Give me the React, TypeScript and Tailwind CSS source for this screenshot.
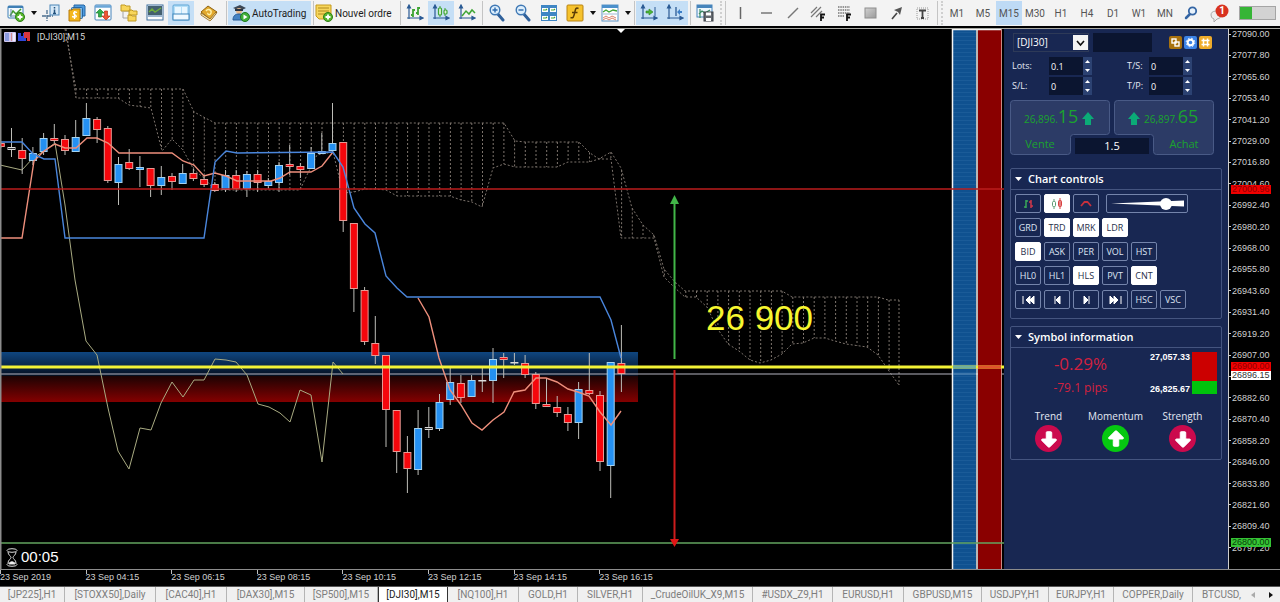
import React, { useState } from 'react';
import { ArrowBigDown, ArrowBigUp } from 'lucide-react';

// [top, bottom, high, low, direction] per bar, one entry every BAR units
type Candle = [number, number, number, number, 'u' | 'd' | 'n'];
type Point = [number, number];

const BAR = 10.7;
const PLOT_W = 1004;
const barX = (i: number) => 0.8 + i * BAR;

const CANDLES: Candle[] = [
  [143, 147, 141, 148, 'd'], [147, 150, 128, 157, 'n'], [150, 159, 138, 174, 'd'], [153, 161, 147, 165, 'u'],
  [138, 152, 133, 155, 'u'], [138, 141, 124, 143, 'd'], [139, 151, 135, 155, 'd'], [137, 152, 120, 152, 'u'],
  [118, 136, 103, 136, 'u'], [119, 130, 117, 143, 'd'], [128, 181, 126, 183, 'd'], [164, 183, 157, 205, 'u'],
  [162, 169, 149, 170, 'd'], [167, 170, 156, 187, 'u'], [168, 186, 168, 197, 'd'], [177, 186, 166, 195, 'u'],
  [176, 182, 173, 190, 'd'], [173, 184, 164, 184, 'u'], [173, 179, 169, 181, 'd'], [179, 185, 176, 187, 'd'],
  [184, 191, 182, 192, 'd'], [175, 190, 170, 192, 'u'], [175, 189, 170, 192, 'd'], [174, 189, 171, 197, 'u'],
  [174, 183, 170, 192, 'd'], [181, 186, 178, 188, 'u'], [165, 183, 162, 192, 'u'], [164, 167, 145, 175, 'd'],
  [166, 170, 163, 178, 'd'], [153, 169, 147, 169, 'u'], [151, 154, 133, 154, 'u'], [143, 151, 103, 152, 'u'],
  [142, 221, 142, 232, 'd'], [223, 289, 223, 312, 'd'], [290, 342, 287, 345, 'd'], [343, 356, 316, 364, 'd'],
  [355, 410, 355, 447, 'd'], [410, 452, 410, 473, 'd'], [452, 469, 436, 493, 'd'], [428, 470, 410, 475, 'u'],
  [427, 430, 407, 438, 'n'], [402, 429, 394, 431, 'u'], [382, 400, 368, 405, 'u'], [383, 398, 375, 403, 'd'],
  [380, 397, 375, 397, 'u'], [380, 381, 368, 392, 'n'], [359, 381, 348, 403, 'u'], [357, 360, 353, 378, 'd'],
  [362, 363, 353, 365, 'n'], [363, 375, 355, 378, 'd'], [374, 404, 372, 409, 'd'], [404, 407, 379, 407, 'd'],
  [407, 413, 396, 417, 'd'], [414, 423, 407, 431, 'd'], [389, 423, 382, 439, 'u'], [390, 394, 353, 395, 'd'],
  [395, 462, 391, 471, 'd'], [362, 466, 362, 498, 'u'], [363, 374, 325, 392, 'd'],
];

const KIJUN: Point[] = [
  [0, 142], [22, 142], [33, 154], [44, 159], [55, 159], [65, 238], [204, 238], [215, 162], [226, 151], [237, 153],
  [333, 152], [343, 167], [354, 208], [365, 224], [375, 233], [386, 276], [397, 288], [407, 297], [600, 297],
  [611, 320], [621, 358],
];
const TENKAN: Point[] = [
  [0, 238], [22, 238], [34, 161], [44, 151], [55, 144], [65, 148], [76, 148], [87, 138], [97, 138], [108, 143],
  [119, 153], [172, 153], [183, 161], [194, 165], [204, 176], [215, 173], [226, 176], [237, 181], [271, 181],
  [280, 178], [290, 172], [311, 172], [322, 166], [333, 152],
];
const TENKAN_RIGHT: Point[] = [
  [418, 298], [429, 317], [439, 358], [450, 390], [461, 405], [472, 423], [482, 430], [493, 420], [504, 412],
  [514, 392], [525, 390], [536, 378], [546, 378], [557, 382], [568, 389], [578, 392], [589, 396], [600, 412],
  [611, 425], [621, 411],
];
const CHIKOU: Point[] = [
  [0, 165], [22, 170], [33, 158], [44, 151], [55, 143], [65, 205], [75, 280], [86, 341], [97, 355], [108, 408],
  [118, 451], [129, 469], [140, 428], [151, 430], [161, 403], [172, 382], [183, 397], [194, 380], [204, 380],
  [215, 359], [226, 360], [236, 362], [247, 375], [258, 404], [269, 407], [280, 413], [290, 422], [300, 390],
  [311, 395], [322, 462], [333, 362], [343, 374],
];
const SPAN_A: Point[] = [
  [65, 29], [76, 89], [183, 89], [194, 112], [215, 123], [504, 123], [515, 141], [525, 142], [579, 142], [590, 153],
  [599, 159], [611, 152], [621, 168], [632, 208], [643, 225], [654, 235], [664, 269], [675, 282], [685, 291],
  [782, 291], [792, 297], [878, 297], [888, 300], [899, 300],
];
const SPAN_B: Point[] = [
  [66, 29], [76, 98], [118, 98], [129, 105], [151, 108], [162, 151], [172, 139], [183, 150], [194, 170], [204, 178],
  [215, 190], [300, 190], [307, 175], [317, 155], [333, 152], [343, 193], [354, 192], [365, 189], [375, 189],
  [386, 190], [397, 196], [450, 196], [461, 200], [472, 202], [482, 207], [493, 168], [504, 164], [515, 167],
  [557, 167], [568, 162], [589, 162], [599, 159], [611, 159], [621, 238], [654, 238], [664, 277], [675, 288],
  [685, 297], [696, 297], [707, 307], [717, 328], [728, 344], [739, 351], [750, 360], [760, 363], [771, 360],
  [782, 354], [792, 344], [803, 343], [814, 338], [825, 338], [835, 341], [846, 344], [867, 347], [878, 355],
  [889, 371], [899, 385],
];

const toPoints = (pts: Point[]) => pts.map(p => p.join(',')).join(' ');

function valueAt(pts: Point[], x: number) {
  for (let k = 1; k < pts.length; k++) {
    if (x <= pts[k][0]) {
      const [x0, y0] = pts[k - 1];
      const [x1, y1] = pts[k];
      return y0 + ((y1 - y0) * (x - x0)) / (x1 - x0);
    }
  }
  return pts[pts.length - 1][1];
}

const HATCH = Array.from({ length: 78 }, (_, k) => Math.min(barX(k + 7) + 0.2, 899));

const PRICES = Array.from({ length: 25 }, (_, i) => (27090 - i * 12.2).toFixed(2));
const TIMES = ['23 Sep 2019', '23 Sep 04:15', '23 Sep 06:15', '23 Sep 08:15', '23 Sep 10:15', '23 Sep 12:15', '23 Sep 14:15', '23 Sep 16:15'];
const TIMEFRAMES = ['M1', 'M5', 'M15', 'M30', 'H1', 'H4', 'D1', 'W1', 'MN'];

const TABS = [
  { name: '[JP225],H1', width: 'w-[65px]' },
  { name: '[STOXX50],Daily', width: 'w-[91px]' },
  { name: '[CAC40],H1', width: 'w-[71px]' },
  { name: '[DAX30],M15', width: 'w-[78px]' },
  { name: '[SP500],M15', width: 'w-[73px]' },
  { name: '[DJI30],M15', width: 'w-[70px]' },
  { name: '[NQ100],H1', width: 'w-[71px]' },
  { name: 'GOLD,H1', width: 'w-[59px]' },
  { name: 'SILVER,H1', width: 'w-[65px]' },
  { name: '_CrudeOilUK_X9,M15', width: 'w-[110px]' },
  { name: '#USDX_Z9,H1', width: 'w-[80px]' },
  { name: 'EURUSD,H1', width: 'w-[71px]' },
  { name: 'GBPUSD,M15', width: 'w-[78px]' },
  { name: 'USDJPY,H1', width: 'w-[67px]' },
  { name: 'EURJPY,H1', width: 'w-[65px]' },
  { name: 'COPPER,Daily', width: 'w-[79px]' },
];

/* ---------- toolbar icons ---------- */

const Svg = ({ children }: { children: React.ReactNode }) => (
  <svg viewBox="0 0 18 18" className="w-[18px] h-[18px] shrink-0" fill="none" aria-hidden="true">{children}</svg>
);
const Axes = () => (
  <path d="M3 2v13M1 14h15M3 1L1.500 4h3zM17 14l-3-1.500v3z" stroke="#2a5a94" fill="#2a5a94" strokeWidth="1.200" />
);
const PlusBadge = () => (
  <g>
    <circle cx="13" cy="13" r="4.500" fill="#55b52c" stroke="#2f7d14" />
    <path d="M13 10.500v5M10.500 13h5" stroke="#fff" strokeWidth="1.800" />
  </g>
);

const NewChartIcon = () => (
  <Svg>
    <rect x="1" y="2" width="15" height="12" rx="1" fill="#f4faff" stroke="#3f7fb5" />
    <path d="M1 3h15" stroke="#3f7fb5" strokeWidth="2" />
    <path d="M3 12l3-5 3 3 5-5" stroke="#3f9a2c" strokeWidth="1.500" />
    <path d="M4 5v8M3 12h10" stroke="#6d8db0" />
    <PlusBadge />
  </Svg>
);
const DataWindowIcon = () => (
  <Svg>
    <path d="M5 6v11M0 12h11" stroke="#4c6f8e" strokeDasharray="4 1" strokeWidth="1.300" />
    <rect x="8" y="1" width="9" height="10" fill="#d7e9f7" stroke="#4b86b8" />
    <path d="M12.500 3v1.500M12.500 5.500v4M11 9.500h3" stroke="#23527c" strokeWidth="1.500" />
  </Svg>
);
const MarketWatchIcon = () => (
  <Svg>
    <path d="M6 1h10l1 1v10H6z" fill="#4d9be0" stroke="#2767a3" />
    <rect x="3.500" y="3.500" width="11" height="11" rx="1" fill="#7ab8ea" stroke="#2767a3" />
    <path d="M1 6h3l1-1h7v12H1z" fill="#f4b71c" stroke="#b67a0c" />
    <path d="M9 8.500c-3-1.500-4.500 1-2.500 2s3 3-.5 2.500l-2-.5M6.500 7v8" stroke="#fff" strokeWidth="1.300" />
  </Svg>
);
const TickArrowsIcon = () => (
  <Svg>
    <rect x="1" y="1" width="16" height="15" rx="1" fill="#fdfdfd" stroke="#4684bb" />
    <path d="M1 2.500h16" stroke="#6ba7d8" strokeWidth="2.500" />
    <path d="M6 5l4 4H7.500v4h-3V9H2z" fill="#32b04c" stroke="#1e8135" strokeWidth=".7" />
    <path d="M12 16l4-4h-2.500V7h-3v5H8z" fill="#ef5634" stroke="#b93217" strokeWidth=".7" />
  </Svg>
);
const NavigatorIcon = () => (
  <Svg>
    <path d="M3 5v9h5M4 7h6" stroke="#a5a5a5" />
    <path d="M1 1h4l1 1h4v5H1zM9 6h3l1 1h4v4H9zM8 11h3l1 1h4v5H8z" fill="#f8d65b" stroke="#c09a25" />
  </Svg>
);
const TerminalIcon = () => (
  <Svg>
    <rect x="1" y="1" width="16" height="15" fill="#fff" stroke="#3c6e9e" />
    <rect x="2" y="2" width="14" height="9" fill="#44606f" />
    <path d="M3 8l3-3 3 3 6-4" stroke="#6fae3c" strokeWidth="1.400" />
    <path d="M2 12h14" stroke="#3c6e9e" />
  </Svg>
);
const SplitIcon = () => (
  <Svg>
    <rect x="1" y="1" width="16" height="15" rx="1" fill="#b5def7" stroke="#5da5d6" />
    <path d="M3 3h6v7H3zM10 3h5v7h-5z" fill="#e9f7ff" />
    <rect x="1" y="10" width="16" height="6" fill="#f1faff" stroke="#3f86bb" />
  </Svg>
);
const BookIcon = () => (
  <Svg>
    <path d="M1 8l7-6 9 6-6 8z" fill="#e2a92f" stroke="#8f6312" />
    <path d="M1 9l9 6 6-7v2l-6 7-9-6z" fill="#fff3c8" stroke="#8f6312" strokeWidth=".8" />
    <path d="M6 7c2-3 6-1 5 2s-4 1-3 0" stroke="#fff1a8" strokeWidth="1.400" />
  </Svg>
);
const AutoTradingIcon = () => (
  <Svg>
    <path d="M1 4l7-3 6 3-6 3z" fill="#3d4856" />
    <circle cx="7" cy="7" r="3" fill="#e8b98c" />
    <path d="M3 5h8v2H3z" fill="#2a3340" />
    <path d="M1 16c0-4 2-6 6-6s5 2 5 6z" fill="#4483c4" stroke="#255b96" />
    <circle cx="13" cy="13" r="4.500" fill="#3fae3a" stroke="#1f7a1d" />
    <path d="M11.500 10.500v5l4-2.500z" fill="#fff" />
  </Svg>
);
const NewOrderIcon = () => (
  <Svg>
    <path d="M1 1h15v11l-5 3H4l-3-3z" fill="#f7d65c" stroke="#c59a1c" />
    <path d="M3 4h11M3 7h11M3 10h7" stroke="#b08a1e" />
    <PlusBadge />
  </Svg>
);
const BarsIcon = () => (
  <Svg><Axes /><path d="M7 5v8M5 11h2M7 6h2M12 3v8M10 9h2M12 4h2" stroke="#3fa535" strokeWidth="1.800" /></Svg>
);
const CandlesIcon = () => (
  <Svg>
    <Axes />
    <path d="M8 2v11M13 4v8" stroke="#3fa535" />
    <rect x="6.500" y="4" width="3" height="7" rx="1" fill="#dff3d9" stroke="#3fa535" strokeWidth="1.200" />
    <rect x="12" y="6" width="3" height="4" rx="1" fill="#dff3d9" stroke="#3fa535" strokeWidth="1.200" />
  </Svg>
);
const LineIcon = () => (
  <Svg><Axes /><path d="M4 12l4-5 3 3 3-4 3 3" stroke="#3fa535" strokeWidth="1.500" /></Svg>
);
const ZoomGlass = ({ plus }: { plus?: boolean }) => (
  <Svg>
    <path d="M9 9l6 7" stroke="#30619b" strokeWidth="3" strokeLinecap="round" />
    <circle cx="7" cy="6" r="4.800" fill="#dceefc" stroke="#3f78b4" strokeWidth="1.400" />
    <path d={plus ? 'M4.500 6h5M7 3.500v5' : 'M4.500 6h5'} stroke="#2b69ad" strokeWidth="1.400" />
  </Svg>
);
const TileIcon = () => (
  <Svg>
    <rect x="1" y="1" width="16" height="16" fill="#3f86c4" />
    <path d="M2 4h6v4H2zM10 4h6v4h-6zM2 12h6v4H2zM10 12h6v4h-6z" fill="#fff" />
    <path d="M3 6h3l1-1M11 6h3l1-1M3 14h3l1-1M11 14h3l1-1" stroke="#4aa535" strokeWidth="1.200" />
  </Svg>
);
const IndicatorIcon = () => (
  <Svg>
    <rect x="1" y="1" width="16" height="16" rx="1" fill="#f6c22d" stroke="#b88313" />
    <path d="M12.500 4.500c-3-1.500-3 1-4 5s-1.500 5-4 4M6 8.500h5.500" stroke="#5b3c06" strokeWidth="1.500" />
  </Svg>
);
const TemplateIcon = () => (
  <Svg>
    <rect x="1" y="1" width="16" height="16" fill="#fff" stroke="#5d95c5" />
    <path d="M1 2.500h16" stroke="#4b90cb" strokeWidth="3" />
    <path d="M2 8l3-2 3 2 4-2 4 1" stroke="#3fa535" strokeWidth="1.300" />
    <path d="M2 10h14" stroke="#9cb9d0" />
    <path d="M2 14l3-2 3 2 3-2 4 2M2 16l3-2 3 2 3-2 4 2" stroke="#d9826a" />
  </Svg>
);
const AutoScrollIcon = () => (
  <Svg><Axes /><path d="M15 3v9" stroke="#2a5a94" /><path d="M6 7h3V5l4 3-4 3V9H6z" fill="#4cb539" stroke="#2d8420" strokeWidth=".6" /></Svg>
);
const ShiftIcon = () => (
  <Svg><Axes /><path d="M10 3v9" stroke="#2a5a94" strokeWidth="1.300" /><path d="M16 7h-2V5l-3 3 3 3V9h2z" fill="#3d7fc7" /></Svg>
);
const SaveChartIcon = () => (
  <Svg>
    <rect x="1" y="1" width="15" height="12" fill="#eef7fd" stroke="#4684bb" />
    <path d="M1 2.500h15" stroke="#4684bb" strokeWidth="3" />
    <path d="M4 5v9M3 10l3-3 3 2 5-3" stroke="#3a8a63" strokeWidth="1.200" />
    <rect x="8" y="8" width="9" height="9" fill="#656a70" stroke="#3c4046" />
    <path d="M10 8.500h5v3h-5zM10 14h5v3h-5z" fill="#fff" />
  </Svg>
);
const VLineIcon = () => <Svg><path d="M9.500 3v12" stroke="#666" strokeWidth="1.500" /></Svg>;
const HLineIcon = () => <Svg><path d="M4 9h11" stroke="#777" strokeWidth="1.500" /></Svg>;
const TrendIcon = () => <Svg><path d="M5 14L15 4" stroke="#777" strokeWidth="1.500" /></Svg>;
const ChannelIcon = () => (
  <Svg>
    <path d="M2 13L12 3M2 9l6-6M7 13l6-6" stroke="#777" strokeWidth="1.200" />
    <path d="M12 17v-6.500h4M12 13.500h3" stroke="#111" strokeWidth="1.800" />
  </Svg>
);
const FiboIcon = () => (
  <Svg>
    <path d="M3 3h12M3 6h12M3 9h12M3 12h6" stroke="#777" strokeWidth="1.300" strokeDasharray="1.500 .8" />
    <path d="M12 17v-6.500h4M12 13.500h3" stroke="#111" strokeWidth="1.800" />
  </Svg>
);
const RectIcon = () => (
  <Svg>
    <defs>
      <linearGradient id="rectShade" x1="0" y1="0" x2="1" y2="1">
        <stop offset="0" stopColor="#d2d2d2" />
        <stop offset="1" stopColor="#999" />
      </linearGradient>
    </defs>
    <rect x="4" y="4" width="11" height="10" fill="url(#rectShade)" stroke="#8e8e8e" />
  </Svg>
);
const ArrowIcon = () => (
  <Svg><path d="M5 15l5-6" stroke="#444" strokeWidth="1.600" /><path d="M7 6l8-3-2 8-2-3z" fill="#555" /></Svg>
);
const TextIcon = () => (
  <Svg>
    <rect x="4" y="4" width="11" height="11" stroke="#999" strokeDasharray="1 1" />
    <path d="M6 6.500h7M9.500 6.500V14M8 14h3" stroke="#444" strokeWidth="1.800" />
  </Svg>
);
const SearchIcon = () => (
  <Svg>
    <path d="M8 10l-4 4" stroke="#3465a4" strokeWidth="2.500" strokeLinecap="round" />
    <circle cx="10.500" cy="7" r="3.700" fill="#e8f2fb" stroke="#3465a4" strokeWidth="1.800" />
  </Svg>
);

const Sep = () => (
  <span className="w-1 h-6 shrink-0 flex justify-center"><span className="w-px h-full bg-[#c4c4c4]" /></span>
);
const Grip = () => (
  <span className="w-[5px] h-6 shrink-0 flex justify-center"><span className="h-full border-l-2 border-dotted border-[#cfcfcf]" /></span>
);

function ToolButton({ label, active, children }: { label: string; active?: boolean; children: React.ReactNode }) {
  return (
    <button
      aria-label={label}
      className={`w-[26px] h-6 shrink-0 flex items-center justify-center cursor-pointer ${active ? 'bg-[#c5dff6]' : ''}`}
    >
      {children}
    </button>
  );
}

const Caret = ({ label }: { label: string }) => (
  <button aria-label={label} className="w-[9px] h-6 shrink-0 flex items-center justify-center">
    <svg viewBox="0 0 6 4" className="w-1.5 h-1 shrink-0"><path d="M0 0h6L3 4z" fill="#111" /></svg>
  </button>
);

function Toolbar() {
  const [frame, setFrame] = useState('M15');
  return (
    <header className="h-[26px] shrink-0 overflow-hidden bg-[#f3f3f3] flex items-center pl-[3px] font-['Roboto',sans-serif] text-[10px] text-[#1c1c1c]">
      <ToolButton label="Nouveau graphique"><NewChartIcon /></ToolButton>
      <Caret label="Liste des graphiques" />
      <ToolButton label="Fenêtre de données"><DataWindowIcon /></ToolButton>
      <ToolButton label="Observation du marché"><MarketWatchIcon /></ToolButton>
      <ToolButton label="Ticks"><TickArrowsIcon /></ToolButton>
      <ToolButton label="Navigateur"><NavigatorIcon /></ToolButton>
      <ToolButton label="Terminal"><TerminalIcon /></ToolButton>
      <ToolButton label="Testeur" active><SplitIcon /></ToolButton>
      <button aria-label="Bibliothèque" className="w-[30px] h-6 shrink-0 flex items-center justify-center"><BookIcon /></button>
      <Sep />
      <button className="w-[83px] h-6 shrink-0 flex items-center gap-0.5 pl-1 bg-[#c5dff6] whitespace-nowrap">
        <AutoTradingIcon />AutoTrading
      </button>
      <Sep />
      <button className="w-[83px] h-6 shrink-0 flex items-center gap-0.5 whitespace-nowrap">
        <NewOrderIcon />Nouvel ordre
      </button>
      <Sep />
      <ToolButton label="Barres"><BarsIcon /></ToolButton>
      <ToolButton label="Chandeliers" active><CandlesIcon /></ToolButton>
      <ToolButton label="Ligne"><LineIcon /></ToolButton>
      <Sep />
      <ToolButton label="Zoom avant"><ZoomGlass plus /></ToolButton>
      <ToolButton label="Zoom arrière"><ZoomGlass /></ToolButton>
      <ToolButton label="Mosaïque"><TileIcon /></ToolButton>
      <ToolButton label="Indicateurs"><IndicatorIcon /></ToolButton>
      <Caret label="Liste des indicateurs" />
      <ToolButton label="Modèles"><TemplateIcon /></ToolButton>
      <Caret label="Liste des modèles" />
      <Sep />
      <ToolButton label="Défilement automatique" active><AutoScrollIcon /></ToolButton>
      <ToolButton label="Décalage du graphique" active><ShiftIcon /></ToolButton>
      <Sep />
      <ToolButton label="Enregistrer"><SaveChartIcon /></ToolButton>
      <Grip />
      <Sep />
      <ToolButton label="Ligne verticale"><VLineIcon /></ToolButton>
      <ToolButton label="Ligne horizontale"><HLineIcon /></ToolButton>
      <ToolButton label="Ligne de tendance"><TrendIcon /></ToolButton>
      <ToolButton label="Canal Fibonacci"><ChannelIcon /></ToolButton>
      <ToolButton label="Retracement Fibonacci"><FiboIcon /></ToolButton>
      <ToolButton label="Rectangle"><RectIcon /></ToolButton>
      <ToolButton label="Flèche"><ArrowIcon /></ToolButton>
      <ToolButton label="Texte"><TextIcon /></ToolButton>
      <Sep />
      <Grip />
      {TIMEFRAMES.map(tf => (
        <button
          key={tf}
          onClick={() => setFrame(tf)}
          className={`w-[26px] h-6 shrink-0 text-center text-[#555] cursor-pointer ${frame === tf ? 'bg-[#bedaf5]' : ''}`}
        >
          {tf}
        </button>
      ))}
      <ToolButton label="Rechercher"><SearchIcon /></ToolButton>
      <button aria-label="Messages" className="relative w-[30px] h-6 shrink-0">
        <svg viewBox="0 0 20 20" className="absolute left-1.5 top-0.5 w-5 h-5" aria-hidden="true">
          <path d="M1 12a5 4 0 1 1 6 4l-3 3v-3a4 4 0 0 1-3-4z" fill="#eee" stroke="#aaa" />
          <circle cx="12" cy="8" r="6.500" fill="#d8321f" />
        </svg>
        <span className="absolute left-3.5 top-1 w-2 text-[10px] leading-3 font-bold text-white">1</span>
      </button>
      <span className="ml-[5px] w-[37px] h-3.5 shrink-0 flex border border-[#a5a5a5] bg-[#d3d3d3]">
        <span className="w-3 bg-[#36b536]" />
      </span>
    </header>
  );
}

/* ---------- plot ---------- */

function Plot() {
  return (
    <div className="relative flex-1 min-w-0 bg-black overflow-hidden">
      <svg viewBox="0 29 1004 540" preserveAspectRatio="none" className="block w-full h-full" fill="none">
        <defs>
          <linearGradient id="zoneBlue" x1="0" y1="0" x2="0" y2="1">
            <stop offset="0" stopColor="#0f4680" />
            <stop offset="1" stopColor="#050f20" />
          </linearGradient>
          <linearGradient id="zoneRed" x1="0" y1="0" x2="0" y2="1">
            <stop offset="0" stopColor="#1c0303" />
            <stop offset="1" stopColor="#840000" />
          </linearGradient>
          <pattern id="stripes" width="22" height="4" patternUnits="userSpaceOnUse">
            <rect width="22" height="4" fill="#0f5190" />
            <rect width="22" height="1" fill="#1a5b98" />
          </pattern>
        </defs>

        <rect x="0" y="352" width="638" height="24" fill="url(#zoneBlue)" />
        <rect x="0" y="376" width="638" height="26" fill="url(#zoneRed)" />

        {/* cloud */}
        <g stroke="#7d746d" strokeWidth="1" strokeDasharray="2 2">
          <polyline points={toPoints(SPAN_A)} />
          <polyline points={toPoints(SPAN_B)} />
          {HATCH.map(x => <path key={x} d={`M${x} ${valueAt(SPAN_A, x)}V${valueAt(SPAN_B, x)}`} />)}
        </g>

        <path d="M0 374h1004" stroke="#b4b4bf" strokeWidth="1.200" />
        <polyline points={toPoints(CHIKOU)} stroke="#a9ab82" strokeWidth="1" />

        {CANDLES.map(([top, bottom, high, low, dir], i) => (
          <g key={i} stroke={dir === 'u' ? '#a5d3f0' : dir === 'd' ? '#e69a94' : '#dcdcdc'}>
            <path d={`M${barX(i)} ${high}V${low}`} stroke="#bdbdb8" />
            <rect
              x={barX(i) - 3.5}
              y={top + 0.5}
              width="7"
              height={Math.max(bottom - top - 1, 0.5)}
              fill={dir === 'u' ? '#2490f2' : dir === 'd' ? '#f5060c' : '#333'}
            />
          </g>
        ))}

        <polyline points={toPoints(TENKAN)} stroke="#ee8f7c" strokeWidth="1.400" />
        <polyline points={toPoints(TENKAN_RIGHT)} stroke="#ee8f7c" strokeWidth="1.400" />
        <polyline points={toPoints(KIJUN)} stroke="#4a86dc" strokeWidth="1.400" />

        {/* supply and demand columns */}
        <rect x="953" y="29" width="23" height="540" fill="url(#stripes)" />
        <rect x="978" y="29" width="23" height="540" fill="#8a0000" />
        <path d="M952.500 569V29.500H1001M977 29v540" stroke="#f4f4f4" strokeWidth="1.500" />
        <path d="M1001.500 29v540" stroke="#c98a84" />

        {/* levels */}
        <path d="M0 189h1004" stroke="#bb1d1d" strokeWidth="1.500" />
        <path d="M0 367h1004" stroke="#f3f236" strokeWidth="3" />
        <path d="M953 367h23" stroke="#6fae9c" strokeWidth="3" />
        <path d="M978 367h23" stroke="#e0532c" strokeWidth="3" />
        <path d="M953 374h23" stroke="#6c9cc4" />
        <path d="M0 543h1004" stroke="#63a45f" strokeWidth="1.500" />

        <path d="M674.500 203v156" stroke="#42b648" strokeWidth="2" />
        <path d="M670 204l4.500-9 4.500 9z" fill="#42b648" />
        <path d="M674.500 370v170" stroke="#cc1c1c" strokeWidth="2" />
        <path d="M670 539l4.500 8 4.500-8z" fill="#e01616" />
        <path d="M617 29h8l-4 4z" fill="#fff" />
        <path d="M0.500 29v540" stroke="#8c8c8c" strokeWidth="2" />
      </svg>

      <div className="absolute left-1 top-0.5 flex items-center gap-0.5 text-[9px] leading-3 text-[#d8d8d8] font-['Roboto',sans-serif]">
        <svg viewBox="0 0 12 10" className="w-3 h-2.5" aria-hidden="true">
          <rect width="12" height="10" rx="1" fill="#cfc6ec" />
          <path d="M1 1h4v8H1z" fill="#8b9be0" />
          <path d="M7 1h1v8H7z" fill="#d58c8c" />
          <path d="M9 1h2v8H9z" fill="#f2ecfb" />
        </svg>
        <svg viewBox="0 0 13 10" className="w-[13px] h-2.5" aria-hidden="true">
          <path d="M0 1h3v3h2V1h3v8H0z" fill="#3047d8" />
          <path d="M6 0h6v9H9V6H6z" fill="#d8373c" />
        </svg>
        <span className="ml-1">[DJI30],M15</span>
      </div>

      <p className="absolute left-[706px] top-[269px] text-[35px] leading-10 text-[#f7f62f] whitespace-nowrap font-['Liberation_Sans',sans-serif]">
        26 900
      </p>

      <div className="absolute left-1.5 bottom-0.5 flex items-center gap-[3px] text-[15px] leading-5 text-white font-['Liberation_Sans',sans-serif]">
        <svg viewBox="0 0 12 19" className="w-3 h-[19px]" fill="none" stroke="#ddd" aria-hidden="true">
          <ellipse cx="6" cy="2.500" rx="5" ry="1.800" />
          <ellipse cx="6" cy="16.500" rx="5" ry="1.800" />
          <path d="M2 4c0 3 3 4 3 5.500S2 12 2 15M10 4c0 3-3 4-3 5.500s3 2.500 3 5.500" />
          <path d="M3 16c1-3 5-3 6 0z" fill="#fff" />
        </svg>
        00:05
      </div>
    </div>
  );
}

function PriceAxis() {
  return (
    <aside className="relative w-[52px] shrink-0 bg-black border-l border-[#cfcfcf] flex flex-col justify-between pb-4 overflow-hidden font-['Liberation_Sans',sans-serif] text-[9px] leading-[10px] text-[#d0d0d0]">
      {PRICES.map(p => (
        <span key={p} className="flex items-center gap-px h-2.5">
          <span className="w-0.5 h-px bg-[#cfcfcf]" />
          {p}
        </span>
      ))}
      <span className="absolute left-0.5 top-[342px] w-10 h-[9px] leading-[9px] pl-px bg-white text-[#333]">26896.15</span>
      <span className="absolute left-0.5 top-[333px] w-10 h-[9px] leading-[9px] pl-px bg-[#f00000] text-[#8c0000]">26900.00</span>
      <span className="absolute left-0.5 top-[156px] w-10 h-[9px] leading-[9px] pl-px bg-[#f00000] text-[#8c0000]">27000.96</span>
      <span className="absolute left-0.5 top-[509px] w-10 h-[9px] leading-[9px] pl-px bg-[#35c435] text-[#083c08]">26800.00</span>
    </aside>
  );
}

/* ---------- trade panel ---------- */

function Spinner({ id, label, value }: { id: string; label: string; value: string }) {
  return (
    <div className="flex items-center h-[18px]">
      <label htmlFor={id} className="w-[37px] text-[9px] text-[#e4e8f2]">{label}</label>
      <input id={id} defaultValue={value} className="w-[34px] h-[18px] bg-[#0b1530] pl-0.5 text-[9px] text-white outline-none" />
      <span className="w-[9px] h-[18px] flex flex-col bg-[#2c4272]">
        {['M0 3h5L2.500 0z', 'M0 0h5L2.500 3z'].map((d, i) => (
          <button key={d} aria-label={`${label} ${i ? '-' : '+'}`} className="flex-1 flex items-center justify-center">
            <svg viewBox="0 0 5 3" className="w-[5px] h-[3px]"><path d={d} fill="#fff" /></svg>
          </button>
        ))}
      </span>
    </div>
  );
}

function Tile({ label, on, children }: { label: string; on?: boolean; children?: React.ReactNode }) {
  return (
    <button
      aria-label={label}
      className={`w-[26px] h-[19px] shrink-0 rounded-[2px] border flex items-center justify-center text-[9px] leading-3 cursor-pointer ${
        on ? 'bg-white border-white text-[#27304a]' : 'border-[#7484ab] text-[#dfe5f2]'
      }`}
    >
      {children ?? label}
    </button>
  );
}

const Section = ({ title, children }: { title: string; children: React.ReactNode }) => (
  <section className="border border-[#44547f] rounded-[2px]">
    <h2 className="h-[21px] flex items-center gap-1.5 pl-1 border-b border-[#44547f] text-[11px] font-semibold text-white">
      <svg viewBox="0 0 7 4" className="w-[7px] h-1"><path d="M0 0h7L3.500 4z" fill="#fff" /></svg>
      {title}
    </h2>
    {children}
  </section>
);

const skips: [string, string][] = [
  ['Début', 'M1 1v8M8 1L4 5l4 4zM12 1L8 5l4 4z'],
  ['Précédent', 'M4 1v8M9 1L5 5l4 4z'],
  ['Suivant', 'M9 1v8M4 1l4 4-4 4z'],
  ['Fin', 'M12 1v8M1 1l4 4-4 4zM5 1l4 4-4 4z'],
];

const signals = [
  { name: 'Trend', up: false },
  { name: 'Momentum', up: true },
  { name: 'Strength', up: false },
];

const QuoteArrow = () => (
  <svg viewBox="0 0 12 14" className="w-3 h-3.5 shrink-0" aria-hidden="true"><path d="M6 0l6 7H9v6H3V7H0z" fill="#0bab77" /></svg>
);

function TradePanel() {
  return (
    <aside className="w-[224px] shrink-0 bg-[#182752] pl-1.5 pr-1.5 pt-1 font-['Open_Sans',sans-serif] text-[#e4e8f2]">
      <div className="flex items-center h-[19px] pl-[3px]">
        <div className="relative w-[76px] h-[19px] border border-[#2e3a58]">
          <select aria-label="Symbole" className="block w-full h-full appearance-none bg-transparent pl-[3px] text-[10px] leading-[17px] text-white outline-none">
            <option>[DJI30]</option>
          </select>
          <svg viewBox="0 0 15 15" className="absolute right-0 top-px w-[15px] h-[15px] pointer-events-none" fill="none">
            <rect width="15" height="15" fill="#f4f4f4" />
            <path d="M4 6l3.500 4L11 6" stroke="#111" strokeWidth="1.600" />
          </svg>
        </div>
        <input aria-label="Recherche" className="ml-1 w-[59px] h-[19px] bg-[#0b1530] outline-none" />
        <div className="ml-[17px] flex gap-0.5">
          <button aria-label="Lier" className="w-[13px] h-[13px] rounded-[2px] bg-[#a8720f]">
            <svg viewBox="0 0 13 13" fill="none" stroke="#fff" strokeWidth="1.400"><rect x="3" y="3" width="4" height="4" /><rect x="6" y="6" width="4" height="4" /></svg>
          </button>
          <button aria-label="Réglages" className="w-[13px] h-[13px] rounded-[2px] bg-[#3b82e6]">
            <svg viewBox="0 0 13 13" fill="none" stroke="#fff">
              <circle cx="6.500" cy="6.500" r="2.800" strokeWidth="2" />
              <circle cx="6.500" cy="6.500" r="4.300" strokeWidth="1" strokeDasharray="1.700 1.700" />
            </svg>
          </button>
          <button aria-label="Agrandir" className="w-[13px] h-[13px] rounded-[2px] bg-[#efac2b]">
            <svg viewBox="0 0 13 13" fill="none" stroke="#fff" strokeWidth="1.500"><path d="M2.500 4.500h8M2.500 8.500h8M4.500 2.500v8M8.500 2.500v8" /></svg>
          </button>
        </div>
      </div>

      <div className="mt-[5px] pl-0.5 grid grid-cols-[98px_1fr] gap-y-0.5">
        <Spinner id="lots" label="Lots:" value="0.1" />
        <div className="pl-[17px] [&_label]:w-[22px]"><Spinner id="ts" label="T/S:" value="0" /></div>
        <Spinner id="sl" label="S/L:" value="0" />
        <div className="pl-[17px] [&_label]:w-[22px]"><Spinner id="tp" label="T/P:" value="0" /></div>
      </div>

      <div className="relative mt-[5px] flex gap-1 text-[#1ba32e]">
        <button className="relative w-[100px] h-[55px] text-left">
          <svg viewBox="0 0 100 55" className="absolute inset-0" aria-hidden="true">
            <path d="M3.500.5h93a3 3 0 0 1 3 3v28a3 3 0 0 1-3 3h-33a3 3 0 0 0-3 3v14a3 3 0 0 1-3 3h-54a3 3 0 0 1-3-3v-48a3 3 0 0 1 3-3z" fill="#2c3b66" stroke="#495a86" />
          </svg>
          <span className="relative flex items-baseline h-[33px] pl-3.5 text-[10px] leading-8">
            26,896.<span className="text-[18px]">15</span>
            <span className="self-center ml-1 mt-1"><QuoteArrow /></span>
          </span>
          <span className="relative block w-[60px] text-center text-[11px] leading-[22px]">Vente</span>
        </button>
        <button className="relative w-[100px] h-[55px] text-left">
          <svg viewBox="0 0 100 55" className="absolute inset-0 -scale-x-100" aria-hidden="true">
            <path d="M3.500.5h93a3 3 0 0 1 3 3v28a3 3 0 0 1-3 3h-33a3 3 0 0 0-3 3v14a3 3 0 0 1-3 3h-54a3 3 0 0 1-3-3v-48a3 3 0 0 1 3-3z" fill="#2c3b66" stroke="#495a86" />
          </svg>
          <span className="relative flex items-baseline h-[33px] pl-3.5 text-[10px] leading-8">
            <span className="self-center mr-1 mt-1"><QuoteArrow /></span>
            26,897.<span className="text-[18px]">65</span>
          </span>
          <span className="relative block w-[60px] ml-auto text-center text-[11px] leading-[22px]">Achat</span>
        </button>
        <input aria-label="Spread" defaultValue="1.5" readOnly className="absolute left-[65px] top-[38px] w-[74px] h-4 bg-[#0b1530] text-center text-[11px] text-white outline-none" />
      </div>

      <div className="mt-[13px] flex flex-col gap-[7px]">
        <Section title="Chart controls">
          <div className="flex flex-col gap-[5px] pl-1 pt-1 pb-[9px]">
            <div className="flex gap-[3px]">
              <Tile label="Barres">
                <svg viewBox="0 0 12 12" className="w-3 h-3" fill="none" strokeWidth="1.500">
                  <path d="M4 2v8M2 9h2M4 3h2" stroke="#3aa65a" />
                  <path d="M9 2v8M7 4h2M9 8h2" stroke="#d0384a" />
                </svg>
              </Tile>
              <Tile label="Chandeliers" on>
                <svg viewBox="0 0 12 12" className="w-3 h-3" fill="none">
                  <path d="M3 1v10" stroke="#5d9c74" />
                  <rect x="1.500" y="3.500" width="3" height="5" rx="1" fill="#fff" stroke="#5d9c74" />
                  <path d="M9 0v11" stroke="#d84040" />
                  <rect x="7.500" y="2.500" width="3" height="6" rx="1" fill="#e58080" stroke="#d84040" />
                </svg>
              </Tile>
              <Tile label="Ligne">
                <svg viewBox="0 0 12 8" className="w-3 h-2" fill="none"><path d="M1 6l3.500-4h3L11 6" stroke="#c9303c" strokeWidth="1.800" /></svg>
              </Tile>
              <span className="relative ml-1 w-[82px] h-[19px] rounded-[2px] border border-[#7484ab]">
                <svg viewBox="0 0 80 17" className="absolute inset-0"><path d="M4 8.500L77 5.500v6z" fill="#fff" /></svg>
                <input
                  type="range"
                  aria-label="Échelle"
                  defaultValue={83}
                  className="absolute left-0.5 top-0 w-[74px] h-[17px] appearance-none bg-transparent [&::-webkit-slider-thumb]:appearance-none [&::-webkit-slider-thumb]:w-3 [&::-webkit-slider-thumb]:h-3 [&::-webkit-slider-thumb]:rounded-full [&::-webkit-slider-thumb]:bg-white"
                />
              </span>
            </div>
            <div className="flex gap-[3px]">
              <Tile label="GRD" /><Tile label="TRD" on /><Tile label="MRK" on /><Tile label="LDR" on />
            </div>
            <div className="flex gap-[3px]">
              <Tile label="BID" on /><Tile label="ASK" /><Tile label="PER" /><Tile label="VOL" /><Tile label="HST" />
            </div>
            <div className="flex gap-[3px]">
              <Tile label="HL0" /><Tile label="HL1" /><Tile label="HLS" on /><Tile label="PVT" /><Tile label="CNT" on />
            </div>
            <div className="flex gap-[3px]">
              {skips.map(([name, d]) => (
                <Tile key={name} label={name}>
                  <svg viewBox="0 0 13 10" className="w-[13px] h-2.5" fill="#fff" stroke="#fff"><path d={d} /></svg>
                </Tile>
              ))}
              <Tile label="HSC" /><Tile label="VSC" />
            </div>
          </div>
        </Section>

        <Section title="Symbol information">
          <div className="flex pt-1 pr-1">
            <div className="w-36 text-center text-[#d3213f]">
              <p className="text-[17px] leading-6">-0.29%</p>
              <p className="text-[12px] leading-6">-79.1 pips</p>
            </div>
            <div className="flex-1 flex justify-end gap-0.5">
              <div className="h-[42px] flex flex-col justify-between font-['Liberation_Sans',sans-serif] font-bold text-[9px] leading-[10px] text-white">
                <span>27,057.33</span>
                <span>26,825.67</span>
              </div>
              <div className="w-[25px] h-[42px] flex flex-col">
                <span className="flex-1 bg-[#cc0000]" />
                <span className="h-[13px] bg-[#00c40c]" />
              </div>
            </div>
          </div>
          <div className="flex pl-1 pr-[5px] pt-[9px] pb-[7px]">
            {signals.map(s => (
              <div key={s.name} className="flex-1 flex flex-col items-center gap-px text-[10px] leading-[15px]">
                {s.name}
                <span className={`w-[27px] h-[27px] rounded-full flex items-center justify-center ${s.up ? 'bg-[#06c811]' : 'bg-[#cb0a4d]'}`}>
                  {s.up ? <ArrowBigUp className="w-[22px] h-[22px] fill-white text-white" strokeWidth={1} /> : <ArrowBigDown className="w-[22px] h-[22px] fill-white text-white" strokeWidth={1} />}
                </span>
              </div>
            ))}
          </div>
        </Section>
      </div>
    </aside>
  );
}

function TimeAxis() {
  return (
    <div className="h-4 shrink-0 bg-black flex pr-[276px] font-['Liberation_Sans',sans-serif] text-[9px] leading-[15px] text-[#d0d0d0]">
      <div className="flex flex-1">
        {TIMES.map(t => (
          <span key={t} className="shrink-0 whitespace-nowrap" style={{ width: `${((8 * BAR) / PLOT_W) * 100}%` }}>
            <span className="block w-px h-1 -mb-1 bg-[#bdbdbd]" />
            {t}
          </span>
        ))}
      </div>
    </div>
  );
}

function ChartTabs() {
  const [current, setCurrent] = useState('[DJI30],M15');
  return (
    <nav className="h-[17px] shrink-0 flex overflow-hidden bg-[#f0f0f0] border-t border-[#555] font-['Roboto',sans-serif] text-[10px] leading-4 text-[#7d7d7d]">
      {TABS.map(tab => (
        <button
          key={tab.name}
          onClick={() => setCurrent(tab.name)}
          className={`${tab.width} h-4 shrink-0 text-center whitespace-nowrap border-r cursor-pointer ${
            current === tab.name ? 'bg-white text-[#222] border-l border-b border-[#333]' : 'border-[#b5b5b5]'
          }`}
        >
          {tab.name}
        </button>
      ))}
      <button className="flex-1 min-w-0 pl-[9px] text-left overflow-hidden whitespace-nowrap">BTCUSD,</button>
      <button aria-label="Onglets précédents" className="w-[18px] shrink-0 flex items-center justify-center">
        <svg viewBox="0 0 4 6" className="w-1 h-1.5"><path d="M4 0v6L0 3z" fill="#aaa" /></svg>
      </button>
      <button aria-label="Onglets suivants" className="w-[18px] shrink-0 flex items-center justify-center">
        <svg viewBox="0 0 4 6" className="w-1 h-1.5"><path d="M0 0v6l4-3z" fill="#111" /></svg>
      </button>
    </nav>
  );
}

export default function App() {
  return (
    <div className="min-h-screen flex flex-col bg-black overflow-hidden">
      <Toolbar />
      <main className="mt-0.5 flex-1 flex flex-col border-t border-[#a9aaa4]">
        <div className="flex-1 flex border-b border-[#8c8c8c] min-h-[540px] [&>*]:min-h-full">
          <Plot />
          <TradePanel />
          <PriceAxis />
        </div>
        <TimeAxis />
      </main>
      <ChartTabs />
    </div>
  );
}
